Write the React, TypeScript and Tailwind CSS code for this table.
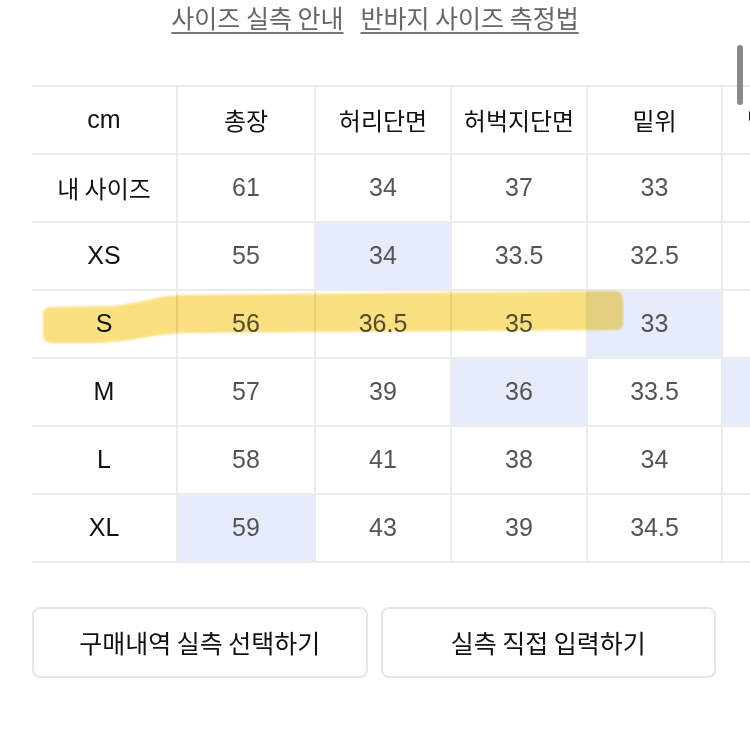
import React from 'react';

const KR = "font-['Noto_Sans_CJK_KR',sans-serif]";
const LAT = "font-['Liberation_Sans','Noto_Sans_CJK_KR',sans-serif]";

const widths = ['w-[146px]', 'w-[138px]', 'w-[136px]', 'w-[136px]', 'w-[135px]', 'w-[136px]'];

const headers = ['cm', '총장', '허리단면', '허벅지단면', '밑위', '밑단단면'];

type Row = { label: string; values: string[]; blue: number[] };

// last column is scrolled out of view, so its values are left blank
const rows: Row[] = [
  { label: '내 사이즈', values: ['61', '34', '37', '33', ''], blue: [] },
  { label: 'XS', values: ['55', '34', '33.5', '32.5', ''], blue: [2] },
  { label: 'S', values: ['56', '36.5', '35', '33', ''], blue: [4] },
  { label: 'M', values: ['57', '39', '36', '33.5', ''], blue: [3, 5] },
  { label: 'L', values: ['58', '41', '38', '34', ''], blue: [] },
  { label: 'XL', values: ['59', '43', '39', '34.5', ''], blue: [1] },
];

function Cell({ col, blue, children }: { col: number; blue?: boolean; children: React.ReactNode }) {
  return (
    <div
      className={`${widths[col]} shrink-0 h-full flex items-center justify-center ${
        col < 5 ? 'border-r-2 border-[#ebebeb]' : ''
      } ${blue ? 'bg-[#e7ecfd]' : ''}`}
    >
      {children}
    </div>
  );
}

export default function App() {
  return (
    <div className="relative w-[750px] h-[754px] overflow-hidden bg-white">
      {/* top links */}
      <div className={`${KR} flex justify-center gap-[17px] h-[85px] text-[25px] leading-[34px] text-[#666]`}>
        <span className="underline decoration-2 underline-offset-[4px] decoration-[#777]">사이즈 실측 안내</span>
        <span className="underline decoration-2 underline-offset-[4px] decoration-[#777]">반바지 사이즈 측정법</span>
      </div>

      {/* size table */}
      <div className="ml-[32px] w-[840px] border-t-2 border-[#ebebeb]">
        <div className="flex h-[68px] border-b-2 border-[#ebebeb]">
          {headers.map((h, i) => (
            <Cell key={h} col={i}>
              <span className={i === 0 ? `${LAT} text-[25px] text-[#111]` : `${KR} text-[24px] text-[#111]`}>{h}</span>
            </Cell>
          ))}
        </div>
        {rows.map((r) => (
          <div key={r.label} className="flex h-[68px] border-b-2 border-[#ebebeb]">
            <Cell col={0}>
              <span
                className={
                  /^[A-Z]+$/.test(r.label) ? `${LAT} text-[25px] text-[#111]` : `${KR} text-[24px] text-[#111]`
                }
              >
                {r.label}
              </span>
            </Cell>
            {r.values.map((v, i) => (
              <Cell key={i} col={i + 1} blue={r.blue.includes(i + 1)}>
                {v && <span className={`${LAT} text-[25px] text-[#555]`}>{v}</span>}
              </Cell>
            ))}
          </div>
        ))}
      </div>

      {/* buttons */}
      <div className={`${KR} flex gap-[13px] ml-[32px] mt-[44px] w-[684px]`}>
        <button className="flex-1 h-[71px] rounded-[8px] border-2 border-[#e6e6e6] text-[25px] text-[#111] bg-white">
          구매내역 실측 선택하기
        </button>
        <button className="flex-1 h-[71px] rounded-[8px] border-2 border-[#e6e6e6] text-[25px] text-[#111] bg-white">
          실측 직접 입력하기
        </button>
      </div>

      {/* hand-drawn highlight */}
      <svg className="absolute left-0 top-0 pointer-events-none mix-blend-multiply" width="750" height="754">
        <defs>
          <filter id="soft">
            <feGaussianBlur stdDeviation="0.8" />
          </filter>
        </defs>
        <path
          d="M43,314 Q43,307 51,307 L112,306 C140,304 152,296 182,295 L614,291 Q623,291 623,300 L623,324 Q623,330 615,330 L182,333 C150,335 128,342 98,343 L52,343 Q43,343 43,335 Z"
          fill="#fae080"
          filter="url(#soft)"
        />
      </svg>

      {/* scrollbar */}
      <div className="absolute left-[737px] top-[45px] w-[6px] h-[60px] rounded-full bg-[#8a8a8a]" />
    </div>
  );
}
